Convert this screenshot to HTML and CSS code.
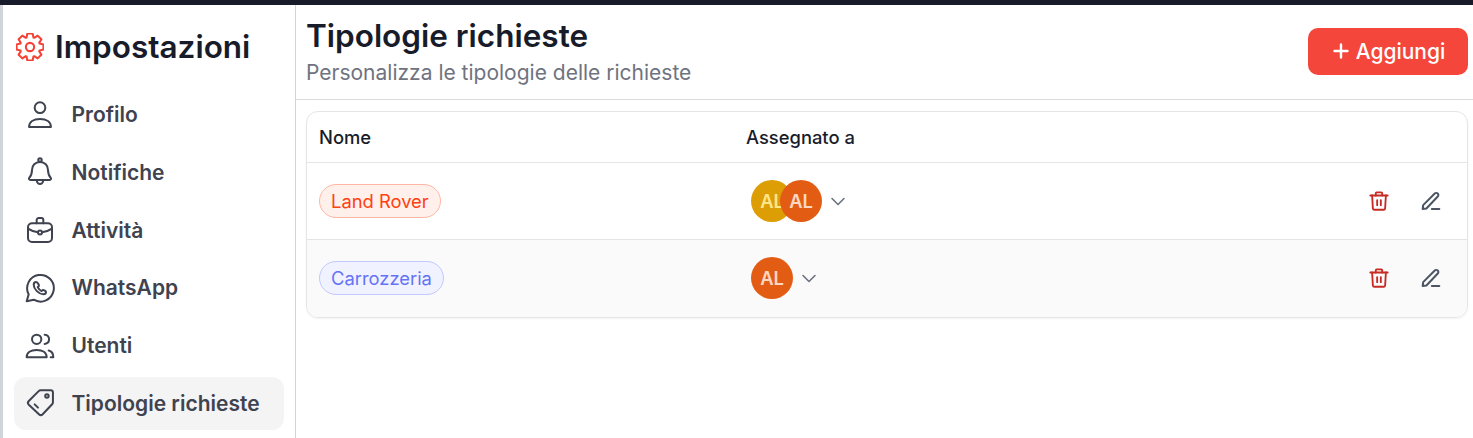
FILE: index.html

```html
<!DOCTYPE html>
<html lang="it">
<head>
  <meta charset="UTF-8">
  <title>Tipologie richieste</title>
  <link rel="stylesheet" href="styles.css">
</head>
<body>
  <div class="topbar"></div>
  <div class="layout">

    <aside class="sidebar">
      <div class="brand">
        <svg class="brand-icon" viewBox="2.500 2.500 19 19" fill="none" stroke="currentColor" stroke-width="1.400" stroke-linecap="round" stroke-linejoin="round">
          <polygon points="18.480,9.640 21.130,10.230 21.130,13.770 18.480,14.360 18.250,14.910 19.710,17.200 17.200,19.710 14.910,18.250 14.360,18.480 13.770,21.130 10.230,21.130 9.640,18.480 9.090,18.250 6.800,19.710 4.290,17.200 5.750,14.910 5.520,14.360 2.870,13.770 2.870,10.230 5.520,9.640 5.750,9.090 4.290,6.800 6.800,4.290 9.090,5.750 9.640,5.520 10.230,2.870 13.770,2.870 14.360,5.520 14.910,5.750 17.200,4.290 19.710,6.800 18.250,9.090"/>
          <circle cx="12" cy="12" r="2.800"/>
        </svg>
        <span class="brand-title">Impostazioni</span>
      </div>

      <nav class="nav">
        <a class="nav-item">
          <svg class="nav-icon" viewBox="0 0 24 24" fill="none" stroke="currentColor" stroke-width="1.500" stroke-linecap="round" stroke-linejoin="round">
            <circle cx="12" cy="6.500" r="4"/>
            <path d="M3.800 21c0-3.900 3.400-6 8.200-6s8.200 2.100 8.200 6z"/>
          </svg>
          <span>Profilo</span>
        </a>
        <a class="nav-item">
          <svg class="nav-icon" viewBox="0 0 24 24" fill="none" stroke="currentColor" stroke-width="1.500" stroke-linecap="round" stroke-linejoin="round">
            <path d="M12 4.500c-3.600 0-6 2.600-6 6 0 2.800-.7 4.400-2 5.800-.6.700-.2 1.700.8 1.700h14.400c1 0 1.400-1 .8-1.700-1.300-1.400-2-3-2-5.800 0-3.400-2.400-6-6-6z"/>
            <circle cx="12" cy="3" r="1.300"/>
            <path d="M9.500 18.500c.3 1.500 1.300 2.500 2.500 2.500s2.200-1 2.500-2.500"/>
          </svg>
          <span>Notifiche</span>
        </a>
        <a class="nav-item">
          <svg class="nav-icon" viewBox="0 0 24 24" fill="none" stroke="currentColor" stroke-width="1.500" stroke-linecap="round" stroke-linejoin="round">
            <path d="M9.500 7V4.500C9.500 3.700 10.200 3 11 3h2c.8 0 1.500.7 1.500 1.500V7"/>
            <rect x="3" y="7" width="18" height="14" rx="3"/>
            <path d="M3 11c2.500 1.700 5.500 2.500 7.500 2.700M21 11c-2.500 1.700-5.500 2.500-7.500 2.700"/>
            <circle cx="12" cy="13.800" r="1.500"/>
          </svg>
          <span>Attività</span>
        </a>
        <a class="nav-item">
          <svg class="nav-icon" viewBox="0 0 24 24" fill="none" stroke="currentColor" stroke-width="1.500" stroke-linecap="round" stroke-linejoin="round">
            <path d="M2 22l1.500-5.200A10 10 0 1 1 7.300 20.800z"/>
            <path d="M9 7.500c-.9 0-1.700.9-1.700 2 0 3.400 3.800 7.200 7.200 7.200 1.100 0 2-.8 2-1.700 0-.5-1.800-1.700-2.300-1.500l-1 .8c-1.200-.5-2.300-1.600-2.900-2.900l.9-1c.2-.6-1.100-2.900-2.200-2.900z"/>
          </svg>
          <span>WhatsApp</span>
        </a>
        <a class="nav-item">
          <svg class="nav-icon" viewBox="0 0 24 24" fill="none" stroke="currentColor" stroke-width="1.500" stroke-linecap="round" stroke-linejoin="round">
            <circle cx="9.500" cy="7" r="3.500"/>
            <path d="M2 20.500c0-3.500 3-5.500 7.500-5.500s7.500 2 7.500 5.500z"/>
            <path d="M15.500 3.500c2 .2 3.300 1.700 3.300 3.500s-1.300 3.300-3.300 3.500"/>
            <path d="M18.500 15.300c2.400.5 3.500 2.300 3.500 5.200h-2"/>
          </svg>
          <span>Utenti</span>
        </a>
        <a class="nav-item is-active">
          <svg class="nav-icon" viewBox="0 0 24 24" fill="none" stroke="currentColor" stroke-width="1.500" stroke-linecap="round" stroke-linejoin="round">
            <path d="M12.500 2.500H20c1 0 1.700.7 1.700 1.700v7.300c0 .5-.2 1-.6 1.400L14 20.400c-.8.800-2 .8-2.800 0l-7.600-7.100c-.8-.8-.8-2 0-2.800L11 3.100c.4-.4 1-.6 1.500-.6z"/>
            <circle cx="17.200" cy="6.800" r="1.300"/>
            <path d="M8 13l2.500 2.500"/>
          </svg>
          <span>Tipologie richieste</span>
        </a>
      </nav>
    </aside>

    <main class="content">
      <header class="page-head">
        <div class="head-text">
          <h1 class="page-title">Tipologie richieste</h1>
          <p class="page-sub">Personalizza le tipologie delle richieste</p>
        </div>
        <button class="btn-add">
          <svg class="plus" viewBox="0 0 16 16" fill="none" stroke="currentColor" stroke-width="2.400" stroke-linecap="round"><path d="M8 1.500v13M1.500 8h13"/></svg>
          Aggiungi
        </button>
      </header>

      <section class="card">
        <div class="row row-head">
          <div>Nome</div>
          <div>Assegnato a</div>
          <div></div>
        </div>

        <div class="row">
          <div><span class="chip chip-orange">Land Rover</span></div>
          <div class="assignees">
            <span class="avatar avatar-yellow">AL</span>
            <span class="avatar avatar-orange avatar-over">AL</span>
            <svg class="chevron" viewBox="0 0 16 16" fill="none" stroke="currentColor" stroke-width="1.600" stroke-linecap="round" stroke-linejoin="round"><path d="M2 5.500l6 6 6-6"/></svg>
          </div>
          <div class="actions">
            <svg class="action-icon icon-trash" viewBox="0 0 24 24" fill="none" stroke="currentColor" stroke-width="2" stroke-linecap="round" stroke-linejoin="round"><path d="M2.500 6h19"/><path d="M8.500 6V3.500c0-.6.400-1 1-1h5c.6 0 1 .4 1 1V6"/><path d="M4.500 6l.8 14c.1.900.8 1.500 1.700 1.500h10c.9 0 1.600-.6 1.700-1.500L19.500 6"/><path d="M10 11v5.500M14 11v5.500"/></svg>
            <svg class="action-icon icon-edit" viewBox="0 0 24 24" fill="none" stroke="currentColor" stroke-width="2.400" stroke-linecap="round" stroke-linejoin="round"><path d="M2 21.500l.6-4.500L16.500 3c1-1 2.600-1 3.600 0 1 1 1 2.600 0 3.600L6.500 21z"/><path d="M13 21.500h9"/></svg>
          </div>
        </div>

        <div class="row row-alt">
          <div><span class="chip chip-indigo">Carrozzeria</span></div>
          <div class="assignees">
            <span class="avatar avatar-orange">AL</span>
            <svg class="chevron" viewBox="0 0 16 16" fill="none" stroke="currentColor" stroke-width="1.600" stroke-linecap="round" stroke-linejoin="round"><path d="M2 5.500l6 6 6-6"/></svg>
          </div>
          <div class="actions">
            <svg class="action-icon icon-trash" viewBox="0 0 24 24" fill="none" stroke="currentColor" stroke-width="2" stroke-linecap="round" stroke-linejoin="round"><path d="M2.500 6h19"/><path d="M8.500 6V3.500c0-.6.400-1 1-1h5c.6 0 1 .4 1 1V6"/><path d="M4.500 6l.8 14c.1.900.8 1.500 1.700 1.500h10c.9 0 1.600-.6 1.700-1.500L19.500 6"/><path d="M10 11v5.500M14 11v5.500"/></svg>
            <svg class="action-icon icon-edit" viewBox="0 0 24 24" fill="none" stroke="currentColor" stroke-width="2.400" stroke-linecap="round" stroke-linejoin="round"><path d="M2 21.500l.6-4.500L16.500 3c1-1 2.600-1 3.600 0 1 1 1 2.600 0 3.600L6.500 21z"/><path d="M13 21.500h9"/></svg>
          </div>
        </div>
      </section>
    </main>

  </div>
</body>
</html>
```

FILE: styles.css

```css
html, body { margin: 0; height: 100%; overflow: hidden; background: #fff; }
body { font-family: Inter, "Liberation Sans", sans-serif; color: #181c2a; }

.topbar { height: 5px; background: #181c2a; }
.layout { display: flex; height: 433px; }

/* sidebar */
.sidebar { width: 292px; flex: none; border-left: 3px solid #d1d5db; border-right: 1px solid #d4d4d4; }
.brand { display: flex; align-items: center; gap: 11px; padding: 24px 0 0 13px; height: 36px; }
.brand-icon { width: 28px; height: 28px; color: #f44336; }
.brand-title { font-size: 31.500px; font-weight: 600; line-height: 36px; }
.nav { display: flex; flex-direction: column; gap: 4.800px; margin: 23px 11px 0; }
.nav-item { display: flex; align-items: center; gap: 15.500px; height: 53px; padding-left: 10px; border-radius: 12px; color: #3f434f; font-size: 21px; font-weight: 600; }
.nav-icon { width: 32px; height: 32px; flex: none; }
.is-active { background: #f4f4f5; }

/* main */
.content { flex: 1; min-width: 0; }
.page-head { display: flex; justify-content: space-between; align-items: center; height: 95px; box-sizing: border-box; padding: 0 5px 2px 10px; border-bottom: 1px solid #d9d9d9; }
.head-text { margin-top: 2px; }
.page-title { margin: 0; font-size: 31.500px; font-weight: 600; line-height: 36px; }
.page-sub { margin: 5px 0 0; font-size: 21px; line-height: 28px; color: #6f7380; }
.btn-add { display: flex; align-items: center; justify-content: center; gap: 7px; height: 47px; width: 160px; padding: 0 0 0 2px; border: 0; border-radius: 10px; background: #f4463b; color: #fff; font-family: inherit; font-size: 21px; font-weight: 500; }
.plus { width: 16px; height: 16px; }

/* table */
.card { margin: 11px 5px 0 10px; border: 1px solid #e5e5e5; border-radius: 12px; overflow: hidden; box-shadow: 0 1px 2px rgba(0, 0, 0, .05); }
.row { display: grid; grid-template-columns: 427px 1fr 180px; align-items: center; height: 76px; padding-left: 12px; border-top: 1px solid #e5e5e5; }
.row-head { height: 50px; border-top: 0; font-size: 18.375px; font-weight: 500; color: #181c2a; }
.row-alt { height: 78px; padding-bottom: 2px; box-sizing: border-box; background: #fafafa; }

.chip { display: inline-block; box-sizing: border-box; height: 34px; padding: 0 11px; border: 1px solid; border-radius: 17px; font-size: 18.375px; line-height: 32px; }
.chip-orange { color: #ff4110; background: #fff0eb; border-color: #ffb7a3; }
.chip-indigo { color: #6672f5; background: #f0f2ff; border-color: #c2c9ff; }

.assignees { display: flex; align-items: center; padding-left: 5px; }
.avatar { display: flex; align-items: center; justify-content: center; width: 42px; height: 42px; border-radius: 50%; font-size: 18.375px; font-weight: 600; flex: none; }
.avatar-yellow { background: #dd9d04; color: #fde68a; }
.avatar-orange { background: #e35c14; color: #fed7c3; }
.avatar-over { margin-left: -13px; }
.chevron { width: 16px; height: 16px; margin-left: 8px; color: #6b7280; }

.actions { display: flex; justify-content: flex-end; align-items: center; gap: 30px; padding-right: 25px; }
.action-icon { width: 22px; height: 22px; }
.icon-trash { color: #c62a22; }
.icon-edit { width: 20px; height: 20px; margin: 0 1px; color: #4b5563; }
```
